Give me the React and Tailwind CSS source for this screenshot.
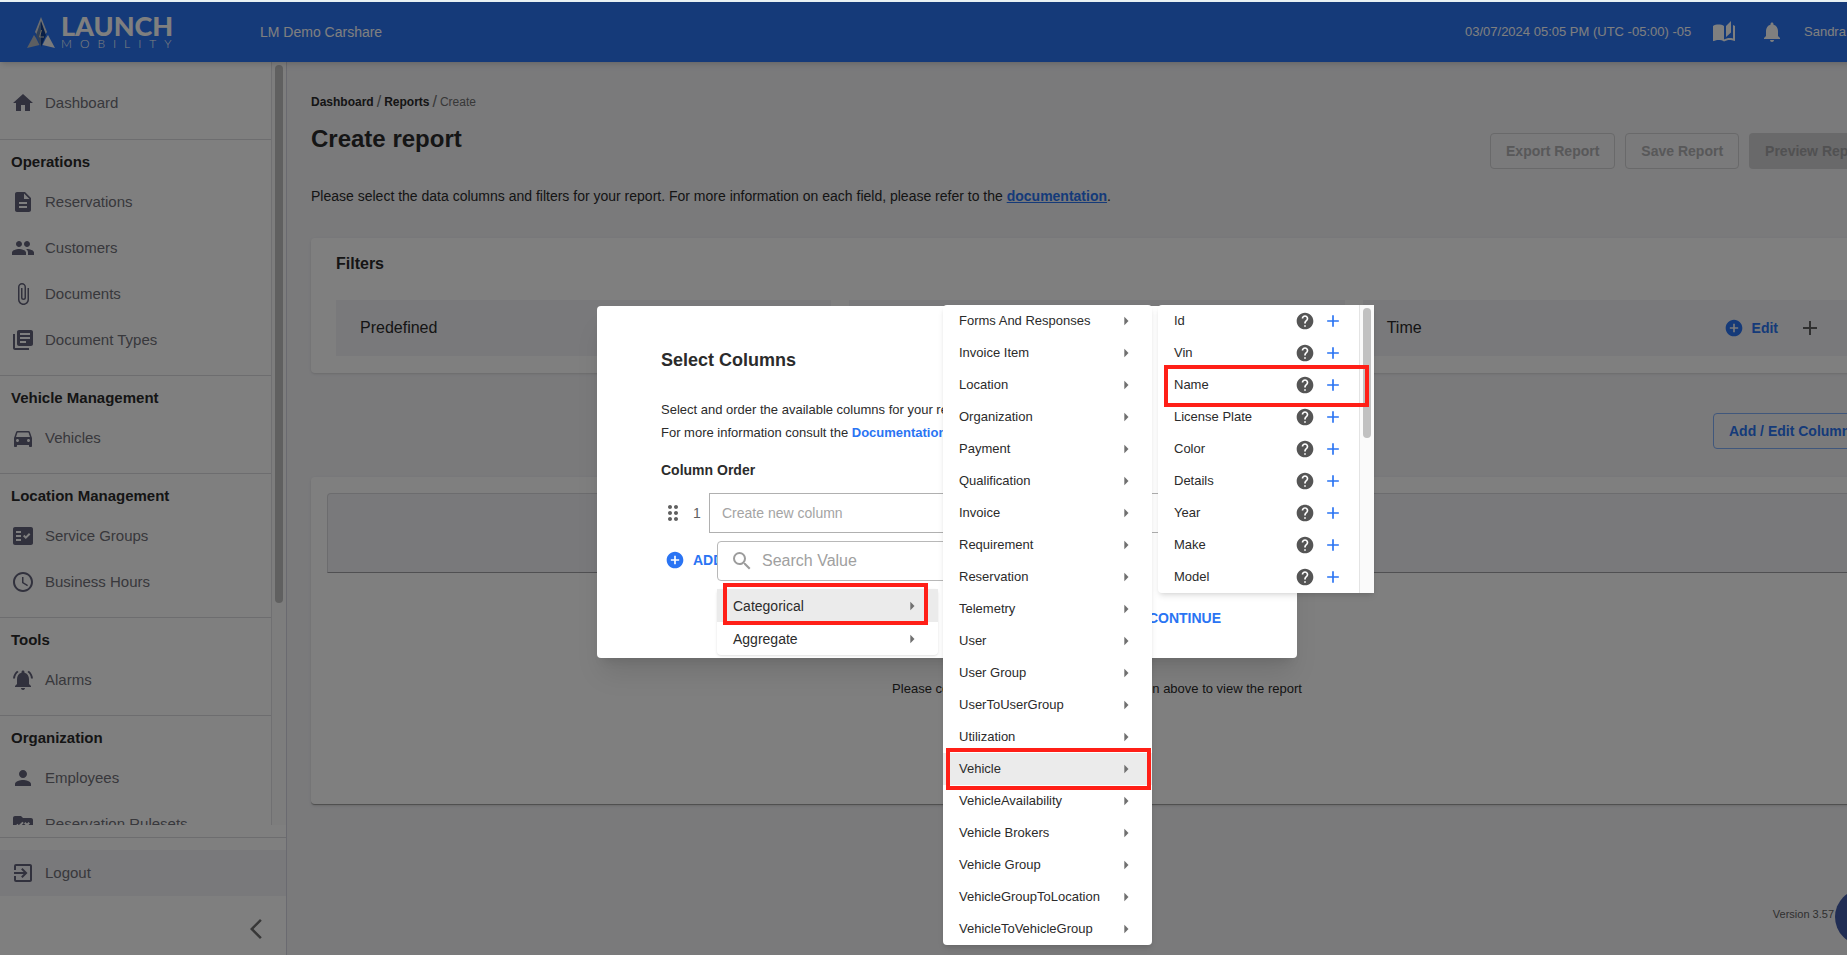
import { useState } from "react";
import clsx from "clsx";
import {
    MdHome,
    MdDescription,
    MdPeople,
    MdAttachFile,
    MdLibraryBooks,
    MdDirectionsCar,
    MdFactCheck,
    MdSchedule,
    MdNotificationsActive,
    MdNotifications,
    MdPerson,
    MdRuleFolder,
    MdExitToApp,
    MdArrowBackIosNew,
    MdAutoStories,
    MdAdd,
    MdAddCircle,
    MdSearch,
    MdHelp,
    MdArrowRight,
    MdDragIndicator,
} from "react-icons/md";

const sections = [
    {
        title: "Operations",
        items: [
            { label: "Reservations", icon: MdDescription },
            { label: "Customers", icon: MdPeople },
            { label: "Documents", icon: MdAttachFile },
            { label: "Document Types", icon: MdLibraryBooks },
        ],
    },
    {
        title: "Vehicle Management",
        items: [{ label: "Vehicles", icon: MdDirectionsCar }],
    },
    {
        title: "Location Management",
        items: [
            { label: "Service Groups", icon: MdFactCheck },
            { label: "Business Hours", icon: MdSchedule },
        ],
    },
    {
        title: "Tools",
        items: [{ label: "Alarms", icon: MdNotificationsActive }],
    },
    {
        title: "Organization",
        items: [
            { label: "Employees", icon: MdPerson },
            { label: "Reservation Rulesets", icon: MdRuleFolder },
        ],
    },
];

const filters = ["Predefined", "Location", "Time"];

const tables = [
    "Forms And Responses",
    "Invoice Item",
    "Location",
    "Organization",
    "Payment",
    "Qualification",
    "Invoice",
    "Requirement",
    "Reservation",
    "Telemetry",
    "User",
    "User Group",
    "UserToUserGroup",
    "Utilization",
    "Vehicle",
    "VehicleAvailability",
    "Vehicle Brokers",
    "Vehicle Group",
    "VehicleGroupToLocation",
    "VehicleToVehicleGroup",
];

const fields = ["Id", "Vin", "Name", "License Plate", "Color", "Details", "Year", "Make", "Model"];

const Logo = () => (
    <a href="#" className="flex items-center gap-1.5 text-white">
        <svg viewBox="0 0 28 31" className="h-[31px] w-7">
            <path d="M14 0 L20 15 L18 18 L14 5 L10 18 L8 15 Z" fill="#d8dbe0" />
            <path d="M14 4 L19 18 L14 30 Z" fill="#123f8f" />
            <path d="M14 4 L9 18 L14 30 Z" fill="#5f7fae" />
            <path d="M7 18 L9 21 L12.500 28 L0 31 Z" fill="#b9bcc2" />
            <path d="M21 18 L19 21 L15.500 28 L28 31 Z" fill="#f4f5f7" />
            <path d="M14.500 13 L12.500 20 L17 20" fill="none" stroke="#d9d2c0" />
        </svg>
        <span className="flex flex-col font-['Lato',sans-serif]">
            <span className="text-[27px] font-black leading-6">LAUNCH</span>
            <span className="text-xs font-light leading-3 tracking-[8px]">MOBILITY</span>
        </span>
    </a>
);

const Header = () => (
    <header className="relative z-10 flex h-[60px] shrink-0 items-center bg-[#2a74f3] text-white shadow-md">
        <div className="w-[260px] pl-[27px]">
            <Logo />
        </div>
        <span className="text-sm">LM Demo Carshare</span>
        <div className="ml-auto flex w-[429px] items-center text-[13px]">
            <span className="w-[247px]">03/07/2024 05:05 PM (UTC -05:00) -05</span>
            <button aria-label="Guide" className="mr-6">
                <MdAutoStories className="size-6" />
            </button>
            <button aria-label="Notifications" className="mr-5">
                <MdNotifications className="size-6" />
            </button>
            <span>Sandra</span>
        </div>
    </header>
);

const NavItem = ({ label, icon: Icon }) => (
    <a href="#" className="flex h-[46px] items-center gap-2.5 pl-[11px] text-[15px] text-[#707078]">
        <Icon className="size-6 text-[#62627a]" />
        {label}
    </a>
);

const Sidebar = () => (
    <aside className="flex w-[287px] shrink-0 flex-col border-r border-[#d4d4e0] bg-white">
        <div className="flex min-h-0 flex-1">
            <nav className="flex-1 overflow-hidden">
                <div className="pt-[18px] pb-[13px]">
                    <NavItem label="Dashboard" icon={MdHome} />
                </div>
                {sections.map((section) => (
                    <div key={section.title} className="border-t border-[#dadade] pt-2.5 pb-3">
                        <h2 className="mb-[5px] pl-[11px] text-[15px] font-bold leading-6 text-[#2b2b2b]">{section.title}</h2>
                        {section.items.map((item) => (
                            <NavItem key={item.label} label={item.label} icon={item.icon} />
                        ))}
                    </div>
                ))}
            </nav>
            <div className="w-[15px] border-l border-[#e0e0e4] bg-[#fafafa] px-[3px] pt-[3px]">
                <div className="h-[538px] w-2 rounded-full bg-[#c1c1c1]" />
            </div>
        </div>
        <div className="mt-3 border-t border-[#dadade] pt-3">
            <div className="bg-[#f2f2f6]">
                <NavItem label="Logout" icon={MdExitToApp} />
            </div>
        </div>
        <div className="flex h-[66px] items-center justify-end pr-[18px]">
            <button aria-label="Collapse menu">
                <MdArrowBackIosNew className="size-6 text-[#707070]" />
            </button>
        </div>
    </aside>
);

const FilterCard = ({ title }) => (
    <div className="flex h-14 items-center bg-[#f2f2f6] pr-9 pl-6">
        <h3 className="text-base text-[#2b2b2b]">{title}</h3>
        <button className="ml-auto flex items-center gap-2 text-sm font-bold text-[#2a74f3]">
            <MdAddCircle className="size-5" />
            Edit
        </button>
        <button aria-label={`Expand ${title}`} className="ml-5">
            <MdAdd className="size-6 text-[#606060]" />
        </button>
    </div>
);

const Report = () => (
    <main className="flex min-w-0 flex-1 flex-col bg-[#f4f4f7] pt-[31px] pr-[11px] pl-6 text-[#2b2b2b]">
        <div className="flex items-center gap-[3px] text-xs leading-[18px]">
            <a href="#" className="font-bold">Dashboard</a>
            <span className="text-base leading-[18px] text-[#707070]">/</span>
            <a href="#" className="font-bold">Reports</a>
            <span className="text-base leading-[18px] text-[#707070]">/</span>
            <span className="text-[#707070]">Create</span>
        </div>
        <div className="mt-3 flex items-start gap-2.5">
            <h1 className="mr-auto text-2xl font-bold leading-8">Create report</h1>
            <button disabled className="mt-2.5 h-9 rounded border border-[#d2d2d4] px-[15px] text-sm font-bold text-[#b0b0b2]">
                Export Report
            </button>
            <button disabled className="mt-2.5 h-9 rounded border border-[#d2d2d4] px-[15px] text-sm font-bold text-[#b0b0b2]">
                Save Report
            </button>
            <button disabled className="mt-2.5 h-9 rounded bg-[#d2d2d4] px-4 text-sm font-bold text-[#a2a2a4]">
                Preview Report
            </button>
        </div>
        <p className="mt-[17px] text-sm leading-5">
            Please select the data columns and filters for your report. For more information on each field, please refer to the{" "}
            <a href="#" className="font-bold text-[#2a74f3] underline">documentation</a>.
        </p>
        <section className="mt-8 rounded bg-white px-[25px] pt-4 pb-[17px] shadow">
            <h2 className="mb-[26px] text-base font-bold leading-5">Filters</h2>
            <div className="grid grid-cols-3 gap-[18px]">
                {filters.map((title) => (
                    <FilterCard key={title} title={title} />
                ))}
            </div>
        </section>
        <button className="mt-10 h-9 w-[170px] self-end rounded border border-[#80aef8] px-[15px] text-left text-sm font-bold text-[#2a74f3]">
            Add / Edit Columns
        </button>
        <section className="mt-7 flex h-[328px] flex-col rounded border-b border-[#a0a0a0] bg-white px-4 pt-4 shadow">
            <div className="h-20 rounded-t border border-[#d8d8dc] border-b-[#a0a0a4] bg-[#f2f2f6]" />
            <p className="flex flex-1 items-center justify-center text-[13px]">
                Please configure the report and use the button above to view the report
            </p>
        </section>
        <p className="mt-auto mb-10 pr-[49px] text-right text-[11px] text-[#606060]">Version 3.57</p>
    </main>
);

const CategoryMenu = () => (
    <div className="absolute top-[235px] left-[120px]">
        <label className="flex h-10 w-[400px] items-center gap-2 rounded border border-[#b8b8b8] bg-white pl-3">
            <MdSearch className="size-6 text-[#9c9c9c]" />
            <input
                aria-label="Search Value"
                placeholder="Search Value"
                className="flex-1 text-base outline-none placeholder:text-[#a0a0a0]"
            />
        </label>
        <ul className="mt-2 w-[221px] rounded bg-white text-sm text-[#2b2b2b] shadow-sm">
            {["Categorical", "Aggregate"].map((name) => (
                <li key={name} className={clsx("relative", name === "Categorical" && "bg-[#ebebeb]")}>
                    <button className="flex h-[33px] w-full items-center justify-between px-4">
                        {name}
                        <MdArrowRight className="size-5 text-[#707070]" />
                    </button>
                    {name === "Categorical" && (
                        <div className="pointer-events-none absolute -top-1.5 right-2.5 -bottom-[3px] left-1.5 border-4 border-[#ff1f17]" />
                    )}
                </li>
            ))}
        </ul>
    </div>
);

const TableMenu = ({ active, onPick }) => (
    <ul className="absolute -top-px left-[346px] w-[209px] rounded bg-white text-[13px] text-[#2b2b2b] shadow-md">
        {tables.map((name) => (
            <li key={name} className={clsx("relative", name === active && "bg-[#ebebeb]")}>
                <button onClick={() => onPick(name)} className="flex h-8 w-full items-center justify-between px-4">
                    {name}
                    <MdArrowRight className="size-5 text-[#707070]" />
                </button>
                {name === active && (
                    <div className="pointer-events-none absolute -inset-y-[5px] right-px left-[3px] border-4 border-[#ff1f17]" />
                )}
            </li>
        ))}
    </ul>
);

const FieldMenu = () => (
    <div className="absolute -top-px left-[561px] flex w-[216px] rounded bg-white text-[13px] text-[#2b2b2b] shadow-md">
        <ul className="flex-1">
            {fields.map((name) => (
                <li key={name} className="relative flex h-8 items-center px-4">
                    <span className="mr-auto">{name}</span>
                    <button aria-label={`About ${name}`} className="mr-2">
                        <MdHelp className="size-5 text-[#555555]" />
                    </button>
                    <button aria-label={`Add ${name}`}>
                        <MdAdd className="size-5 text-[#2a74f3]" />
                    </button>
                    {name === "Name" && (
                        <div className="pointer-events-none absolute -top-1 -right-[10px] -bottom-1.5 left-1.5 z-10 border-4 border-[#ff1f17]" />
                    )}
                </li>
            ))}
        </ul>
        <div className="w-[15px] border-l border-[#e4e4e4] bg-[#fafafa] px-[3px] pt-[3px]">
            <div className="h-[130px] w-2 rounded-full bg-[#c1c1c1]" />
        </div>
    </div>
);

const ColumnDialog = () => {
    const [active, setActive] = useState("Vehicle");

    return (
        <div role="dialog" aria-labelledby="dialog-title" className="relative w-[700px] rounded bg-white px-16 pt-10 pb-[22px] text-[#2b2b2b] shadow-xl">
            <h2 id="dialog-title" className="text-lg font-bold leading-7">Select Columns</h2>
            <p className="mt-6 text-[13px] leading-[23px]">
                Select and order the available columns for your report.
                <br />
                For more information consult the <a href="#" className="font-bold text-[#2a74f3]">Documentation</a>
            </p>
            <h3 className="mt-4 text-sm font-bold leading-5">Column Order</h3>
            <div className="mt-[13px] flex items-center gap-2">
                <MdDragIndicator className="size-6 text-[#606060]" />
                <label htmlFor="column-1" className="w-2 text-sm text-[#606060]">1</label>
                <input
                    id="column-1"
                    placeholder="Create new column"
                    className="h-10 flex-1 border border-[#b0b0b0] px-3 text-sm placeholder:text-[#a4a4a4]"
                />
            </div>
            <button className="mt-[9px] flex h-9 items-center gap-2 pl-1 text-sm font-bold text-[#2a74f3]">
                <MdAddCircle className="size-5" />
                ADD COLUMN
            </button>
            <div className="mt-[22px] flex justify-end">
                <button className="h-9 px-3 text-sm font-bold text-[#2a74f3]">CONTINUE</button>
            </div>
            <CategoryMenu />
            <TableMenu active={active} onPick={setActive} />
            <FieldMenu />
        </div>
    );
};

const App = () => {
    return (
        <div className="h-screen overflow-hidden font-['Liberation_Sans',Arial,sans-serif]">
            <div className="h-0.5 bg-[#e8f1f4]" />
            <div className="relative flex h-[calc(100vh+5px)] w-[calc(100%+47px)] flex-col">
                <Header />
                <div className="flex min-h-0 flex-1">
                    <Sidebar />
                    <Report />
                </div>
                <button aria-label="Help" className="absolute right-[3px] bottom-[17px] size-14 rounded-full bg-[#405aa8]" />
                <div className="absolute inset-0 z-20 flex items-center justify-center bg-black/50">
                    <ColumnDialog />
                </div>
            </div>
        </div>
    );
};

export default App;
